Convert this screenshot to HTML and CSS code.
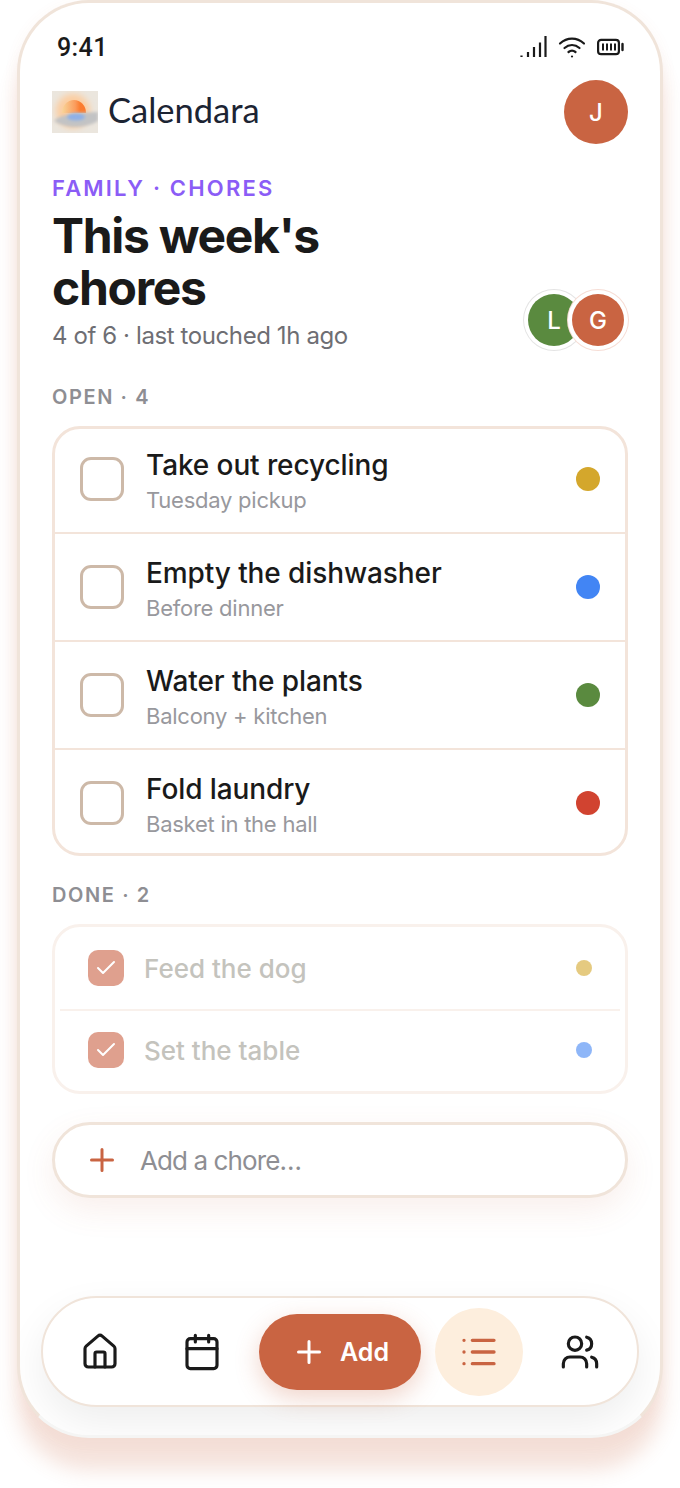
FILE: index.html
```html
<!doctype html>
<html>
  <head>
    <title>Calendara - Chores</title>
    <link rel="stylesheet" href="styles.css">
  </head>

  <body>
    <div class="phone">
      <div class="status">
        <span class="time">9:41</span>
        <div class="status_icons">
          <svg width="27" height="22" viewBox="0 0 27 22" fill="none" stroke="#1a1a1a" stroke-width="2.2">
            <path d="M1.500 19.500v1.500M8 16v5M14 11v10M20 6.500v14.500M25.500 0v21"/>
          </svg>
          <svg width="28" height="22" viewBox="0 0 28 22" fill="none" stroke="#1a1a1a" stroke-width="2.200" stroke-linecap="round">
            <path d="M2 7.500c7-6.500 17-6.500 24 0"/>
            <path d="M6.500 12c4.500-4 10.500-4 15 0"/>
            <path d="M10.500 16c2-1.500 5-1.500 7 0"/>
            <path d="M14 20.500h.01"/>
          </svg>
          <svg width="27" height="18" viewBox="0 0 27 18" fill="none" stroke="#1a1a1a">
            <rect x="1.100" y="1.800" width="20.800" height="14.400" rx="3" stroke-width="2.200"/>
            <path d="M6 5.500v7M10 5.500v7M14 5.500v7M18 5.500v7" stroke-width="2"/>
            <path d="M25.500 6v6" stroke-width="2.400" stroke-linecap="round"/>
          </svg>
        </div>
      </div>

      <div class="app_header">
        <div class="brand">
          <svg class="logo" width="46" height="42" viewBox="0 0 46 42">
            <defs>
              <filter id="soft" x="-30%" y="-30%" width="160%" height="160%"><feGaussianBlur stdDeviation="3"/></filter>
              <filter id="softer" x="-30%" y="-30%" width="160%" height="160%"><feGaussianBlur stdDeviation="1.500"/></filter>
              <linearGradient id="sun" x1="0" x2="1" y1="0" y2="0">
                <stop offset="0" stop-color="#f8d59a"/>
                <stop offset="0.550" stop-color="#fb9c5c"/>
                <stop offset="0.750" stop-color="#fb7d30"/>
                <stop offset="1" stop-color="#fb7a2e"/>
              </linearGradient>
            </defs>
            <rect width="46" height="42" fill="#ebe6de"/>
            <circle cx="21" cy="20" r="17" fill="#fccda0" filter="url(#soft)"/>
            <path d="M10 22a12 13 0 0 1 24 0z" fill="url(#sun)"/>
            <path d="M2 30c5-6 18-8 44-9v9c-14 8-32 8-44 0z" fill="#c2c3c4" filter="url(#softer)"/>
            <ellipse cx="24" cy="26" rx="9" ry="3.500" fill="#8fb0e6" filter="url(#softer)"/>
          </svg>
          <span class="brand_name">Calendara</span>
        </div>
        <div class="avatar_me">J</div>
      </div>

      <div class="eyebrow">FAMILY · CHORES</div>
      <div class="title_row">
        <div>
          <h1>This week's<br>chores</h1>
          <div class="subtitle">4 of 6 · last touched 1h ago</div>
        </div>
        <div class="people">
          <div class="person person_green">L</div>
          <div class="person person_rust">G</div>
        </div>
      </div>

      <div class="section_label label_open">OPEN · 4</div>
      <div class="card">
        <div class="row">
          <div class="box"></div>
          <div class="row_text">
            <div class="row_title">Take out recycling</div>
            <div class="row_sub">Tuesday pickup</div>
          </div>
          <div class="dot dot_yellow"></div>
        </div>
        <div class="row">
          <div class="box"></div>
          <div class="row_text">
            <div class="row_title">Empty the dishwasher</div>
            <div class="row_sub">Before dinner</div>
          </div>
          <div class="dot dot_blue"></div>
        </div>
        <div class="row">
          <div class="box"></div>
          <div class="row_text">
            <div class="row_title">Water the plants</div>
            <div class="row_sub">Balcony + kitchen</div>
          </div>
          <div class="dot dot_green"></div>
        </div>
        <div class="row">
          <div class="box"></div>
          <div class="row_text">
            <div class="row_title">Fold laundry</div>
            <div class="row_sub">Basket in the hall</div>
          </div>
          <div class="dot dot_red"></div>
        </div>
      </div>

      <div class="section_label label_done">DONE · 2</div>
      <div class="card card_done">
        <div class="done_row">
          <div class="box_done">
            <svg width="24" height="24" viewBox="0 0 24 24" fill="none" stroke="#fff" stroke-width="2" stroke-linecap="round" stroke-linejoin="round"><path d="M20 6 9 17l-5-5"/></svg>
          </div>
          <div class="done_title">Feed the dog</div>
          <div class="dot_small dot_yellow"></div>
        </div>
        <div class="done_row">
          <div class="box_done">
            <svg width="24" height="24" viewBox="0 0 24 24" fill="none" stroke="#fff" stroke-width="2" stroke-linecap="round" stroke-linejoin="round"><path d="M20 6 9 17l-5-5"/></svg>
          </div>
          <div class="done_title">Set the table</div>
          <div class="dot_small dot_blue"></div>
        </div>
      </div>

      <div class="add_input">
        <svg width="36" height="36" viewBox="0 0 24 24" fill="none" stroke="#c96442" stroke-width="2" stroke-linecap="round"><path d="M5 12h14M12 5v14"/></svg>
        <span>Add a chore…</span>
      </div>

      <div class="nav">
        <svg class="nav_icon" width="40" height="40" viewBox="0 0 24 24">
          <path d="M15 21v-8a1 1 0 0 0-1-1h-4a1 1 0 0 0-1 1v8"/>
          <path d="M3 10a2 2 0 0 1 .709-1.528l7-5.999a2 2 0 0 1 2.582 0l7 5.999A2 2 0 0 1 21 10v9a2 2 0 0 1-2 2H5a2 2 0 0 1-2-2z"/>
        </svg>
        <svg class="nav_icon" width="40" height="40" viewBox="0 0 24 24">
          <path d="M8 2v4M16 2v4M3 10h18"/>
          <rect x="3" y="4" width="18" height="18" rx="2"/>
        </svg>
        <div class="nav_add">
          <svg width="36" height="36" viewBox="0 0 24 24" fill="none" stroke="#fff" stroke-width="2" stroke-linecap="round"><path d="M5 12h14M12 5v14"/></svg>
          <span>Add</span>
        </div>
        <div class="nav_active">
          <svg width="40" height="40" viewBox="0 0 24 24" fill="none" stroke="#c96442" stroke-width="2" stroke-linecap="round"><path d="M3 5h.01M3 12h.01M3 19h.01M8 5h13M8 12h13M8 19h13"/></svg>
        </div>
        <svg class="nav_icon" width="40" height="40" viewBox="0 0 24 24">
          <path d="M16 21v-2a4 4 0 0 0-4-4H6a4 4 0 0 0-4 4v2"/>
          <path d="M16 3.128a4 4 0 0 1 0 7.744"/>
          <path d="M22 21v-2a4 4 0 0 0-3-3.870"/>
          <circle cx="9" cy="7" r="4"/>
        </svg>
      </div>
    </div>
  </body>
</html>
```

FILE: styles.css
```css
* {
  box-sizing: border-box;
}

body {
  min-height: 1488px;
  margin: 0;
  background-color: #fff;
  font-family: "Inter", "Liberation Sans", sans-serif;
  color: #1a1a1a;
}

.phone {
  display: flex;
  flex-direction: column;
  width: 646px;
  height: 1438px;
  margin: 0 17px;
  padding: 0 32px;
  background-color: #fff;
  border: 3px solid #f0e4da;
  border-bottom-color: #f5f5f4;
  border-radius: 72px;
  overflow: hidden;
  box-shadow:
    0 32px 20px rgba(201, 100, 66, 0.19),
    0 4px 16px rgba(201, 100, 66, 0.06);
}

/* status bar */
.status {
  display: flex;
  justify-content: space-between;
  align-items: center;
  height: 32px;
  margin-top: 28px;
  padding: 0 4px 0 5px;
}

.time {
  font-family: "Roboto", sans-serif;
  font-size: 25px;
  font-weight: 500;
  letter-spacing: 0.4px;
}

.status_icons {
  display: flex;
  align-items: center;
  gap: 11px;
}

/* header */
.app_header {
  display: flex;
  justify-content: space-between;
  align-items: center;
  height: 64px;
  margin-top: 17px;
}

.brand {
  display: flex;
  align-items: center;
  gap: 10px;
}

.brand_name {
  padding-bottom: 6px;
  font-family: "Lato", sans-serif;
  font-size: 34.5px;
  color: #1c2433;
}

.avatar_me {
  display: flex;
  justify-content: center;
  align-items: center;
  width: 64px;
  height: 64px;
  border-radius: 50%;
  background-color: #c96442;
  color: #fff;
  font-size: 24px;
  font-weight: 500;
}

.eyebrow {
  margin-top: 30px;
  font-size: 22px;
  line-height: 28px;
  font-weight: 600;
  letter-spacing: 2.2px;
  color: #8b5cf6;
}

.title_row {
  display: flex;
  justify-content: space-between;
  align-items: flex-end;
  margin-top: 8px;
}

h1 {
  margin: 0;
  font-size: 48px;
  line-height: 52px;
  font-weight: 700;
  letter-spacing: -1.3px;
}

.subtitle {
  margin-top: 6px;
  font-size: 24px;
  line-height: 32px;
  letter-spacing: -0.4px;
  color: #6e6e73;
}

.people {
  display: flex;
  padding: 0 4px 6px 0;
}

.person {
  display: flex;
  justify-content: center;
  align-items: center;
  width: 52px;
  height: 52px;
  border-radius: 50%;
  color: #fff;
  font-size: 24px;
  font-weight: 500;
}

.person_green {
  background-color: #5a8a3f;
  box-shadow: 0 0 0 4px #fff, 0 0 0 5px #e4e4e4;
}

.person_rust {
  margin-left: -8px;
  background-color: #c96442;
  box-shadow: 0 0 0 4px #fff, 0 0 0 5px #f6ddd5;
}

.section_label {
  font-size: 20px;
  line-height: 24px;
  font-weight: 600;
  letter-spacing: 1.6px;
  color: #8e8e93;
}

.label_open {
  margin-top: 33px;
}

.label_done {
  margin-top: 27px;
}

/* chore cards */
.card {
  margin-top: 17px;
  background-color: #fff;
  border: 3px solid #f3e4da;
  border-radius: 28px;
}

.row {
  display: flex;
  align-items: center;
  height: 108px;
  padding: 0 25px;
  border-bottom: 2px solid #f3e4da;
}

.row:first-child {
  margin-top: -3px;
}

.row:last-child {
  height: 106px;
  margin-bottom: -3px;
  border-bottom: none;
}

.box {
  width: 44px;
  height: 44px;
  border: 3px solid #cdb9a8;
  border-radius: 11px;
}

.row_text {
  flex: 1;
  margin-left: 22px;
  padding-top: 6px;
}

.row_title {
  font-size: 28px;
  line-height: 36px;
  font-weight: 500;
  letter-spacing: -0.1px;
}

.row_sub {
  font-size: 22px;
  line-height: 34px;
  letter-spacing: -0.25px;
  color: #98989d;
}

.dot {
  width: 24px;
  height: 24px;
  border-radius: 50%;
}

.dot_yellow {
  background-color: #d4a72c;
}

.dot_blue {
  background-color: #4285f4;
}

.dot_green {
  background-color: #5a8a3f;
}

.dot_red {
  background-color: #d14330;
}

/* done card, faded out */
.card_done {
  height: 170px;
  padding: 0 5px;
  border-color: #f9f1ec;
}

.done_row {
  display: flex;
  align-items: center;
  height: 78px;
  padding: 0 28px;
}

.done_row:first-child {
  height: 84px;
  border-bottom: 2px solid #f9f1ec;
}

.box_done {
  display: flex;
  justify-content: center;
  align-items: center;
  width: 36px;
  height: 36px;
  border-radius: 10px;
  background-color: #dfa08e;
}

.done_title {
  flex: 1;
  margin-left: 20px;
  font-size: 26px;
  font-weight: 500;
  color: #c4c3bd;
}

.dot_small {
  width: 16px;
  height: 16px;
  border-radius: 50%;
  opacity: 0.6;
}

/* add a chore */
.add_input {
  display: flex;
  align-items: center;
  gap: 20px;
  height: 76px;
  margin-top: 28px;
  padding: 0 29px;
  background-color: #fff;
  border: 3px solid #f0e4da;
  border-radius: 38px;
  box-shadow: 0 12px 32px rgba(201, 100, 66, 0.1);
  font-size: 26px;
  letter-spacing: -0.9px;
  color: #8e8e93;
}

/* bottom nav */
.nav {
  display: flex;
  align-items: center;
  height: 111px;
  margin: auto -11px 28px;
  padding: 0 21px 0 37px;
  background-color: #fff;
  border: 2px solid #f0e4da;
  border-radius: 56px;
  box-shadow: 0 16px 40px rgba(0, 0, 0, 0.07);
}

.nav_icon {
  flex-shrink: 0;
  fill: none;
  stroke: #1a1a1a;
  stroke-width: 1.9;
  stroke-linecap: round;
  stroke-linejoin: round;
}

.nav_icon:nth-child(2) {
  margin-left: 62px;
}

.nav_add {
  display: flex;
  justify-content: center;
  align-items: center;
  gap: 13px;
  width: 162px;
  height: 76px;
  margin-left: 37px;
  border-radius: 38px;
  background-color: #c96442;
  box-shadow: 0 8px 24px rgba(201, 100, 66, 0.28);
  color: #fff;
  font-size: 25px;
  font-weight: 600;
}

.nav_active {
  display: flex;
  justify-content: center;
  align-items: center;
  width: 88px;
  height: 88px;
  margin-left: 14px;
  border-radius: 50%;
  background-color: #fdeedd;
}

.nav_icon:last-child {
  margin-left: 37px;
}
```
